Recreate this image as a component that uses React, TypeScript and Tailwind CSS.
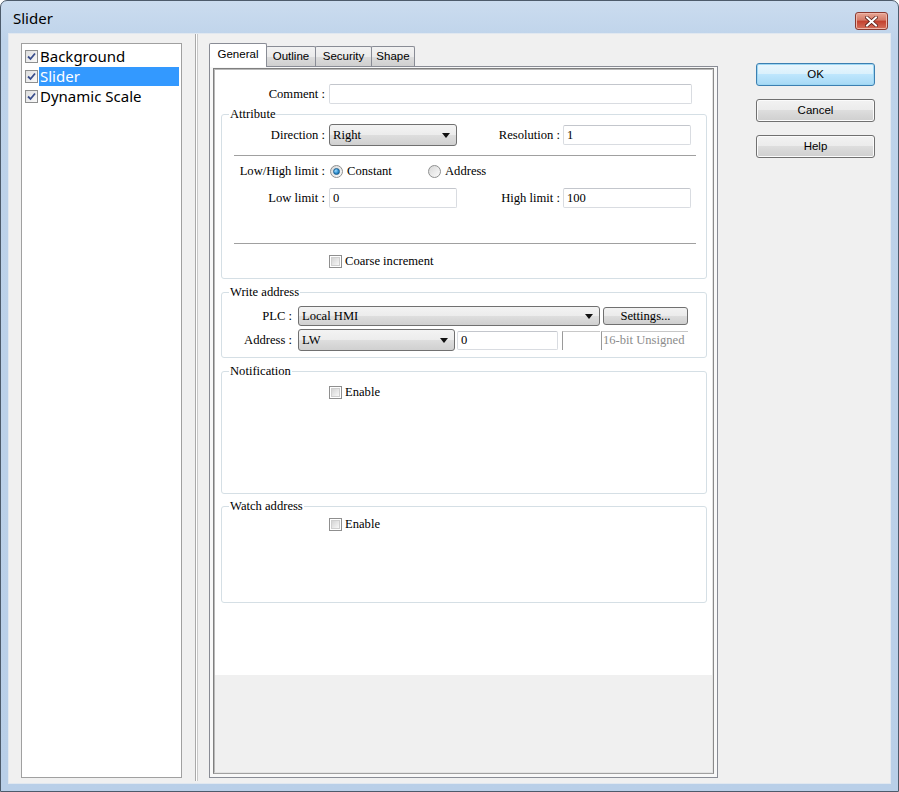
import React from "react";

const serif = "font-['Liberation_Serif',serif] text-[12.6px] leading-none text-black";
const ui = "font-['Liberation_Sans',sans-serif] text-[11.5px] leading-none text-black";

function Arrow() {
  return (
    <svg width="8" height="5" viewBox="0 0 8 5">
      <path d="M0 0h8L4 5z" fill="#111" />
    </svg>
  );
}

function Select({ className, value }: { className: string; value: string }) {
  return (
    <div
      className={`flex items-center justify-between rounded-[3px] border border-[#707070] bg-[linear-gradient(#f3f3f3,#ececec_50%,#dedede_50%,#d0d0d0)] pl-[3px] pr-[6px] ${className}`}
    >
      <span className={serif}>{value}</span>
      <Arrow />
    </div>
  );
}

function Input({ className, value }: { className: string; value?: string }) {
  return (
    <div
      className={`flex items-center rounded-[2px] border border-[#d9dce1] border-t-[#c3c6cc] bg-white pl-[3px] ${className}`}
    >
      <span className={serif}>{value}</span>
    </div>
  );
}

function Check() {
  return (
    <div className="h-[13px] w-[13px] border border-[#8f8f8f] bg-white p-[1px]">
      <div className="h-full w-full border border-[#cfcfcf] bg-[linear-gradient(135deg,#d4d4d4,#f7f7f7)]" />
    </div>
  );
}

function Radio({ on }: { on?: boolean }) {
  return (
    <div className="flex h-[13px] w-[13px] items-center justify-center rounded-full border border-[#8e8f8f] bg-[linear-gradient(135deg,#d8d8d8,#fbfbfb)]">
      {on ? (
        <div className="h-[7px] w-[7px] rounded-full border border-[#1a5f8f] bg-[radial-gradient(circle_at_35%_35%,#9fdcff,#2d8ed0_55%,#145b8d)]" />
      ) : null}
    </div>
  );
}

function Group({ label, className, children }: { label: string; className: string; children?: React.ReactNode }) {
  return (
    <div className={`relative rounded-[3px] border border-[#d5dfe5] ${className}`}>
      <span className={`absolute left-[7px] top-[-7px] bg-white px-[1px] ${serif}`}>{label}</span>
      {children}
    </div>
  );
}

function TreeCheck() {
  return (
    <div className="flex h-[13px] w-[13px] shrink-0 items-center justify-center border border-[#8e8f8f] bg-[linear-gradient(135deg,#dedede,#fafafa)]">
      <svg width="9" height="9" viewBox="0 0 9 9">
        <path d="M1 4.5 L3.5 7 L8 1.5" stroke="#3a4e8c" strokeWidth="1.8" fill="none" />
      </svg>
    </div>
  );
}

function Button({ label, primary }: { label: string; primary?: boolean }) {
  return (
    <div
      className={`flex h-[23px] w-[119px] items-center justify-center rounded-[3px] border ${
        primary
          ? "border-[#3c7fb1] bg-[linear-gradient(#eaf6fd,#d9f0fc_50%,#bee6fd_50%,#a7d9f5)] shadow-[inset_0_0_0_1px_#9ed7f3]"
          : "border-[#707070] bg-[linear-gradient(#f2f2f2,#ebebeb_50%,#dddddd_50%,#cfcfcf)] shadow-[inset_0_0_0_1px_#fbfbfb]"
      }`}
    >
      <span className={ui}>{label}</span>
    </div>
  );
}

export default function App() {
  return (
    <div className="flex h-[792px] w-[899px] flex-col overflow-hidden rounded-t-[7px] border border-[#4d5b6b] bg-[linear-gradient(#cbdcef,#bed3ea_40px,#b9cfe8)]">
      {/* Title bar */}
      <div className="flex h-[32px] shrink-0 items-start justify-between">
        <span className="ml-[12px] mt-[10px] font-['Noto_Sans',sans-serif] text-[15px] leading-none text-black">
          Slider
        </span>
        <div className="mr-[10px] mt-[11px] flex h-[18px] w-[33px] items-center justify-center rounded-[3px] border border-[#8a3a30] bg-[linear-gradient(#e8a795,#d47a68_45%,#c2402e_50%,#d5705c)] shadow-[inset_0_0_0_1px_#eeb5a8]">
          <svg width="13" height="11" viewBox="0 0 13 11">
            <path d="M2 1.5 L11 9.5 M11 1.5 L2 9.5" stroke="#5a1f18" strokeWidth="3.6" strokeLinecap="square" />
            <path d="M2 1.5 L11 9.5 M11 1.5 L2 9.5" stroke="#ffffff" strokeWidth="2" strokeLinecap="square" />
          </svg>
        </div>
      </div>

      {/* Content */}
      <div className="mx-[7px] mb-[7px] flex flex-1 border border-[#e1e8f0] bg-[#f0f0f0]">
        {/* Tree */}
        <div className="ml-[12px] mt-[9px] h-[735px] w-[161px] shrink-0 border border-[#a0a0a0] bg-white pt-[2px]">
          <div className="flex h-[20px] items-center pl-[3px]">
            <TreeCheck />
            <span className="ml-[2px] font-['Noto_Sans',sans-serif] text-[15px] leading-none text-black">Background</span>
          </div>
          <div className="flex h-[20px] items-center pl-[3px]">
            <TreeCheck />
            <div className="ml-[1px] mr-[2px] flex h-[19px] flex-1 items-center bg-[#3399ff] pl-[1px]">
              <span className="font-['Noto_Sans',sans-serif] text-[15px] leading-none text-white">Slider</span>
            </div>
          </div>
          <div className="flex h-[20px] items-center pl-[3px]">
            <TreeCheck />
            <span className="ml-[2px] font-['Noto_Sans',sans-serif] text-[15px] leading-none text-black">Dynamic Scale</span>
          </div>
        </div>

        {/* Splitter */}
        <div className="ml-[13px] h-[747px] w-[3px] shrink-0 border-l border-r border-l-[#a9a9a9] border-r-[#c8c8c8] bg-white" />

        {/* Tab control */}
        <div className="ml-[11px] mt-[9px] flex w-[509px] shrink-0 flex-col">
          <div className="flex h-[23px] items-end">
            <div className="relative z-10 -mb-px flex h-[24px] w-[58px] items-start justify-center rounded-t-[2px] border border-b-0 border-[#898c95] bg-white pt-[5px]">
              <span className={ui}>General</span>
            </div>
            <div className="-ml-px flex h-[20px] w-[50px] items-center justify-center rounded-t-[2px] border border-b-0 border-[#898c95] bg-[linear-gradient(#f2f2f2,#ebebeb_50%,#dddddd_50%,#cfcfcf)]">
              <span className={ui}>Outline</span>
            </div>
            <div className="-ml-px flex h-[20px] w-[57px] items-center justify-center rounded-t-[2px] border border-b-0 border-[#898c95] bg-[linear-gradient(#f2f2f2,#ebebeb_50%,#dddddd_50%,#cfcfcf)]">
              <span className={ui}>Security</span>
            </div>
            <div className="-ml-px flex h-[20px] w-[44px] items-center justify-center rounded-t-[2px] border border-b-0 border-[#898c95] bg-[linear-gradient(#f2f2f2,#ebebeb_50%,#dddddd_50%,#cfcfcf)]">
              <span className={ui}>Shape</span>
            </div>
          </div>

          <div className="h-[712px] border border-[#898c95] bg-[#f8f8f8] px-[3px] pb-[3px] pt-[1px]">
            <div className="flex h-full flex-col border border-[#7f7f7f] border-b-[#a0a0a0] border-r-[#8a8a8a]">
              <div className="flex h-full flex-col border border-[#b9b9b9] border-b-[#e3e3e3] border-r-[#e3e3e3]">
                {/* White page */}
                <div className="h-[605px] shrink-0 bg-white pl-[6px] pr-[5px] pt-[14px]">
                  {/* Comment */}
                  <div className="flex h-[20px] items-center">
                    <div className={`w-[104px] text-right ${serif}`}>Comment :</div>
                    <Input className="ml-[4px] h-[20px] w-[363px]" />
                  </div>

                  {/* Attribute */}
                  <Group label="Attribute" className="mt-[10px] h-[165px]">
                    <div className="mt-[9px] flex h-[22px] items-center">
                      <div className={`w-[103px] text-right ${serif}`}>Direction :</div>
                      <Select className="ml-[4px] h-[22px] w-[128px]" value="Right" />
                      <div className={`w-[103px] text-right ${serif}`}>Resolution :</div>
                      <Input className="ml-[3px] h-[20px] w-[128px]" value="1" />
                    </div>
                    <div className="ml-[12px] mt-[9px] h-[2px] w-[462px] border-b border-t border-b-white border-t-[#a0a0a0]" />
                    <div className="mt-[6px] flex h-[16px] items-center">
                      <div className={`w-[103px] text-right ${serif}`}>Low/High limit :</div>
                      <div className="ml-[5px] flex w-[98px] items-center">
                        <Radio on />
                        <span className={`ml-[4px] ${serif}`}>Constant</span>
                      </div>
                      <div className="flex items-center">
                        <Radio />
                        <span className={`ml-[4px] ${serif}`}>Address</span>
                      </div>
                    </div>
                    <div className="mt-[9px] flex h-[20px] items-center">
                      <div className={`w-[103px] text-right ${serif}`}>Low limit :</div>
                      <Input className="ml-[4px] h-[20px] w-[128px]" value="0" />
                      <div className={`w-[103px] text-right ${serif}`}>High limit :</div>
                      <Input className="ml-[3px] h-[20px] w-[128px]" value="100" />
                    </div>
                    <div className="ml-[12px] mt-[35px] h-[2px] w-[462px] border-b border-t border-b-white border-t-[#a0a0a0]" />
                    <div className="ml-[107px] mt-[9px] flex h-[14px] items-center">
                      <Check />
                      <span className={`ml-[3px] ${serif}`}>Coarse increment</span>
                    </div>
                  </Group>

                  {/* Write address */}
                  <Group label="Write address" className="mt-[13px] h-[66px]">
                    <div className="mt-[13px] flex h-[20px] items-center">
                      <div className={`w-[70px] text-right ${serif}`}>PLC :</div>
                      <Select className="ml-[6px] h-[20px] w-[302px]" value="Local HMI" />
                      <div className="ml-[3px] flex h-[18px] w-[85px] items-center justify-center rounded-[3px] border border-[#707070] bg-[linear-gradient(#f2f2f2,#ebebeb_50%,#dddddd_50%,#cfcfcf)]">
                        <span className={serif}>Settings...</span>
                      </div>
                    </div>
                    <div className="mt-[3px] flex h-[22px] items-center">
                      <div className={`w-[70px] text-right ${serif}`}>Address :</div>
                      <Select className="ml-[6px] h-[22px] w-[157px]" value="LW" />
                      <Input className="ml-[2px] h-[19px] w-[101px]" value="0" />
                      <div className="ml-[4px] h-[19px] w-[38px] border-l border-t border-l-[#9a9a9a] border-t-[#c8c8c8]" />
                      <div className="ml-[1px] flex h-[19px] w-[87px] items-center border-l border-t border-l-[#9a9a9a] border-t-[#c8c8c8] pl-[1px]">
                        <span className="font-['Liberation_Serif',serif] text-[12.6px] leading-none text-[#8c8c8c]">16-bit Unsigned</span>
                      </div>
                    </div>
                  </Group>

                  {/* Notification */}
                  <Group label="Notification" className="mt-[13px] h-[123px]">
                    <div className="ml-[107px] mt-[13px] flex h-[14px] items-center">
                      <Check />
                      <span className={`ml-[3px] ${serif}`}>Enable</span>
                    </div>
                  </Group>

                  {/* Watch address */}
                  <Group label="Watch address" className="mt-[12px] h-[97px]">
                    <div className="ml-[107px] mt-[10px] flex h-[14px] items-center">
                      <Check />
                      <span className={`ml-[3px] ${serif}`}>Enable</span>
                    </div>
                  </Group>
                </div>
                <div className="flex-1 bg-[#f0f0f0]" />
              </div>
            </div>
          </div>
        </div>

        {/* Buttons */}
        <div className="ml-[38px] mt-[29px] flex flex-col gap-[13px]">
          <Button label="OK" primary />
          <Button label="Cancel" />
          <Button label="Help" />
        </div>
      </div>
    </div>
  );
}
